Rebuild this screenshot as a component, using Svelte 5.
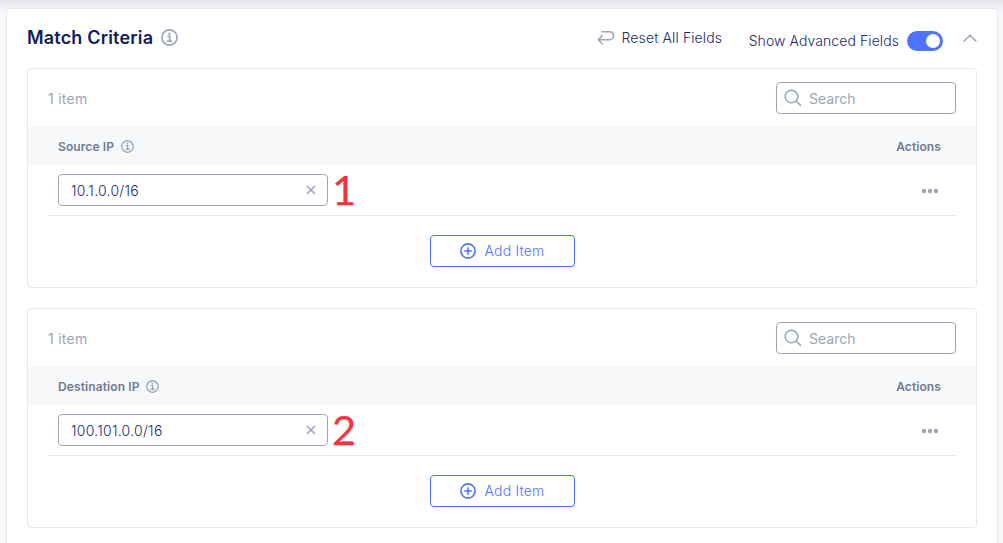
<script>
  const groups = [
    { label: 'Source IP', value: '10.1.0.0/16', mark: '1' },
    { label: 'Destination IP', value: '100.101.0.0/16', mark: '2' }
  ];
</script>

{#snippet info(size)}
  <svg class="info" width={size} height={size} viewBox="0 0 16 16" fill="none" stroke="currentColor" stroke-width="1.6">
    <circle cx="8" cy="8" r="7.1" />
    <path d="M6 7h2.2v4.3M5.6 11.4h5" />
    <circle cx="7.9" cy="4.5" r="1.1" fill="currentColor" stroke="none" />
  </svg>
{/snippet}

<div class="page">
  <section class="panel">
    <header>
      <h1>Match Criteria</h1>
      {@render info(17)}
      <div class="tools">
        <span class="reset">
          <svg width="18" height="16" viewBox="0 0 18 16" fill="none" stroke="currentColor" stroke-width="1.6" stroke-linecap="round" stroke-linejoin="round">
            <path d="M5.2 1.7H12.6a4 4 0 0 1 0 8H1.3M5.1 5.6L1.3 9.7l3.8 4.1" />
          </svg>
          <span class="reset-text">Reset All Fields</span>
        </span>
        <span class="advanced">Show Advanced Fields</span>
        <span class="toggle"><i></i></span>
        <svg class="chevron" width="14" height="8" viewBox="0 0 14 8" fill="none" stroke="currentColor" stroke-width="1.6" stroke-linecap="round" stroke-linejoin="round"><path d="M1.2 7L7 1.2 12.8 7" /></svg>
      </div>
    </header>

    {#each groups as g}
      <div class="card">
        <div class="bar">
          <span class="count">1 item</span>
          <div class="search">
            <svg width="18" height="18" viewBox="0 0 18 18" fill="none" stroke="currentColor" stroke-width="1.6" stroke-linecap="round"><circle cx="7.5" cy="7.5" r="6.3" /><path d="M12.2 12.2l4.3 4.1" /></svg>
            <span>Search</span>
          </div>
        </div>
        <div class="head">
          <span>{g.label}</span>
          {@render info(13)}
          <span class="actions">Actions</span>
        </div>
        <div class="row">
          <div class="field">
            <span>{g.value}</span>
            <svg width="10" height="10" viewBox="0 0 10 10" fill="none" stroke="currentColor" stroke-width="1.7"><path d="M1 1l8 8M9 1L1 9" /></svg>
          </div>
          <span class="mark">{g.mark}</span>
          <svg class="dots" width="18" height="6" viewBox="0 0 18 6" fill="currentColor"><circle cx="3" cy="3" r="2.2" /><circle cx="9" cy="3" r="2.2" /><circle cx="15" cy="3" r="2.2" /></svg>
        </div>
        <button>
          <svg width="16" height="16" viewBox="0 0 16 16" fill="none" stroke="currentColor" stroke-width="1.6"><circle cx="8" cy="8" r="7.1" /><path d="M8 4.2v7.6M4.2 8h7.6" /></svg>
          <span>Add Item</span>
        </button>
      </div>
    {/each}
  </section>
</div>

<style>
  :global(body) { background: #f7f8fa; }
  .page, .page * { box-sizing: border-box; }
  .page {
    height: 543px;
    overflow: hidden;
    padding: 8px 5px 0 6px;
    background: linear-gradient(#e4e5ea, #eeeff3 7px, #f7f8fa 14px);
    font: 14px/20px Inter, sans-serif;
    color: #1a2a6c;
  }
  .panel {
    height: 560px;
    padding: 0 20px;
    background: #fff;
    border: 1px solid #e4e6f2;
    border-radius: 4px;
  }
  header { display: flex; align-items: center; height: 59px; }
  h1 { margin: 0 0 2px; font-size: 18px; line-height: 24px; font-weight: 600; letter-spacing: 0.18px; color: #0f1c5c; }
  header > .info { margin: 0 0 3px 7.5px; }
  .info { color: #9da6b9; flex: none; }
  .tools { display: flex; align-items: center; margin-left: auto; font-weight: 300; letter-spacing: 0.12px; }
  .reset { display: flex; align-items: center; gap: 7px; margin: 0 26.5px 1px 0; }
  .reset svg, .chevron { color: #9da6b9; }
  .reset-text { margin-bottom: 1px; }
  .advanced { padding-top: 5px; letter-spacing: 0.08px; }
  .toggle {
    width: 36px; height: 20px; margin: 5px 20px 0 8px; padding: 3px;
    display: flex; justify-content: flex-end; border-radius: 10px; background: #4f73ff;
  }
  .toggle i { width: 14px; height: 14px; border-radius: 50%; background: #fff; }
  .chevron { margin-bottom: 1px; }
  .card {
    display: flex; flex-direction: column;
    height: 220px; margin-bottom: 20px;
    border: 1px solid #e4e6f2; border-radius: 4px;
  }
  .bar { display: flex; align-items: center; justify-content: space-between; height: 58px; padding: 0 20px; }
  .count { color: #9da6b9; padding-top: 1px; letter-spacing: 0.25px; }
  .search {
    display: flex; align-items: center; gap: 7px;
    width: 180px; height: 32px; padding-left: 7px;
    border: 1px solid #9da6b9; border-radius: 4px; color: #9da6b9;
  }
  .search span { padding-top: 2px; }
  .head {
    display: flex; align-items: center; height: 38px; padding: 1px 35px 0 30px;
    background: #f6f8fa; color: #6f7b92; font-size: 12px; font-weight: 600;
    letter-spacing: 0.1px;
  }
  .head span { padding-top: 1px; }
  .head .info { margin: 0 0 0 7px; }
  .actions { margin-left: auto; }
  .row { display: flex; align-items: center; height: 51px; margin: 0 20px; padding: 0 17px 0 10px; border-bottom: 1px solid #e4e6f2; }
  .field {
    display: flex; align-items: center; justify-content: space-between;
    width: 270px; height: 32px; padding: 0 11px 0 12px;
    border: 1px solid #9da6b9; border-radius: 4px; font-weight: 300; letter-spacing: 0.27px;
  }
  .field span { padding-top: 2px; }
  .field svg { color: #9da6b9; margin-bottom: 1px; }
  .mark { margin: 0 0 2px 4px; font: 41.5px/42px Lato, sans-serif; color: #f5333f; -webkit-text-stroke: 0.25px #f5333f; }
  .dots { margin: 2px 0 0 auto; color: #9da6b9; }
  button {
    display: flex; align-items: center; justify-content: center; gap: 8px;
    align-self: center; width: 145px; height: 32px; margin: 19px 0 0 1px; padding: 0;
    background: #fff; border: 1px solid #4f73ff; border-radius: 4px;
    color: #4f73ff; font: 300 14px/20px Inter, sans-serif; letter-spacing: 0.2px;
  }
</style>
